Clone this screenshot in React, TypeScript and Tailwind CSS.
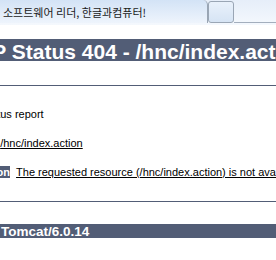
export default function App() {
  return (
    <div className="w-[276px] h-[260px] overflow-hidden bg-white font-['Liberation_Sans',Arial,sans-serif] text-black">
      <div className="flex h-[25px] bg-gradient-to-b from-[#e6eef9] to-[#f4f8fd]">
        <div className="w-[208px] h-[23px] shrink-0 flex items-center pl-[3px] pt-[1px] border-r border-[#99a5b4] rounded-tr-[5px] bg-gradient-to-b from-[#d3e3f6] to-[#eef4fc]">
          <span className="text-[11px] text-[#1a1a1a] whitespace-nowrap font-['Noto_Sans_CJK_KR',sans-serif]">
            소프트웨어 리더, 한글과컴퓨터!
          </span>
        </div>
        <div className="w-[26px] h-[22px] shrink-0 mt-[1px] rounded-[3px] border border-[#9aa6b5] bg-gradient-to-b from-[#e9f1fb] to-[#d6e4f4]" />
        <div className="flex-1 h-[23px] border-b border-[#a3aebd]" />
      </div>
      <div className="h-[14px]" />
      <h1 className="h-[22px] bg-[#525d76] text-white font-bold text-[21px] leading-[26px] whitespace-nowrap">
        <span className="ml-[-48.5px]">HTTP Status 404 - /hnc/index.action</span>
      </h1>
      <div className="mt-[24px] h-px bg-[#525d76]" />
      <p className="mt-[22px] h-[13px] leading-[13px] text-[11px] whitespace-nowrap">
        <span className="ml-[-45px]">
          <b className="bg-[#525d76] text-white">type</b> Status report
        </span>
      </p>
      <p className="mt-[16px] h-[13px] leading-[13px] text-[11px] whitespace-nowrap">
        <span className="ml-[-50px]">
          <b className="bg-[#525d76] text-white">message</b> <u>/hnc/index.action</u>
        </span>
      </p>
      <p className="mt-[16px] h-[13px] leading-[13px] text-[11px] whitespace-nowrap">
        <span className="ml-[-49.3px]">
          <b className="bg-[#525d76] text-white">description</b>{" "}
          <u className="ml-[3px]">The requested resource (/hnc/index.action) is not available.</u>
        </span>
      </p>
      <div className="mt-[22px] h-px bg-[#525d76]" />
      <h3 className="mt-[22px] h-[14px] bg-[#525d76] text-white font-bold text-[13.5px] leading-[16px] whitespace-nowrap">
        <span className="ml-[-51.5px]">Apache Tomcat/6.0.14</span>
      </h3>
    </div>
  );
}
